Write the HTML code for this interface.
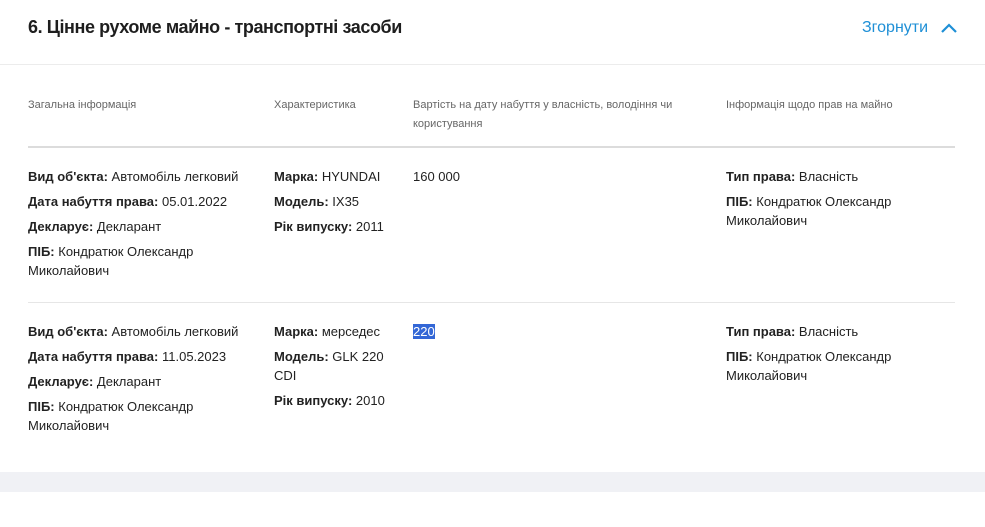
<!DOCTYPE html>
<html><head><meta charset="utf-8"><style>
*{margin:0;padding:0;box-sizing:border-box}
body{width:985px;height:527px;background:#fff;font-family:"Liberation Sans",sans-serif;color:#222;position:relative;overflow:hidden}
.title{position:absolute;left:28px;top:17px;font-size:18px;font-weight:700;color:#1e1e1e;letter-spacing:-0.42px}
.tog{position:absolute;left:862px;top:19px;font-size:16px;color:#1e8fd6}
.tog svg{position:absolute;left:78px;top:3px}
.hl{position:absolute;left:0;right:0;top:64px;height:1px;background:#ececec}
.h{position:absolute;top:96px;font-size:11px;line-height:19px;color:#666}
.hu{position:absolute;left:28px;width:927px;top:146px;height:2px;background:#dcdcdc}
.sep{position:absolute;left:28px;width:927px;top:302px;height:1px;background:#e6e6e6}
.c{position:absolute;font-size:13px;line-height:19px;color:#222}
.c p{margin-bottom:6px}
b{font-weight:700}
.band{position:absolute;left:0;right:0;top:472px;height:20px;background:#f0f1f5}
.sel{background:#3367d6;color:#fff}
</style></head><body>
<div class="title">6. Цінне рухоме майно - транспортні засоби</div>
<div class="tog">Згорнути<svg width="18" height="12" viewBox="0 0 18 12"><path d="M2 10 L9 3 L16 10" fill="none" stroke="#1e8fd6" stroke-width="2.2"/></svg></div>
<div class="hl"></div>
<div class="h" style="left:28px">Загальна інформація</div>
<div class="h" style="left:274px">Характеристика</div>
<div class="h" style="left:413px;width:290px">Вартість на дату набуття у власність, володіння чи користування</div>
<div class="h" style="left:726px">Інформація щодо прав на майно</div>
<div class="hu"></div>

<div class="c" style="left:28px;top:167px;width:230px">
<p><b>Вид об'єкта:</b> Автомобіль легковий</p>
<p><b>Дата набуття права:</b> 05.01.2022</p>
<p><b>Декларує:</b> Декларант</p>
<p><b>ПІБ:</b> Кондратюк Олександр Миколайович</p></div>
<div class="c" style="left:274px;top:167px;width:125px">
<p><b>Марка:</b> HYUNDAI</p><p><b>Модель:</b> IX35</p><p><b>Рік випуску:</b> 2011</p></div>
<div class="c" style="left:413px;top:167px">160 000</div>
<div class="c" style="left:726px;top:167px;width:200px">
<p><b>Тип права:</b> Власність</p><p><b>ПІБ:</b> Кондратюк Олександр Миколайович</p></div>
<div class="sep"></div>

<div class="c" style="left:28px;top:322px;width:230px">
<p><b>Вид об'єкта:</b> Автомобіль легковий</p>
<p><b>Дата набуття права:</b> 11.05.2023</p>
<p><b>Декларує:</b> Декларант</p>
<p><b>ПІБ:</b> Кондратюк Олександр Миколайович</p></div>
<div class="c" style="left:274px;top:322px;width:125px">
<p><b>Марка:</b> мерседес</p><p><b>Модель:</b> GLK 220 CDI</p><p><b>Рік випуску:</b> 2010</p></div>
<div class="c" style="left:413px;top:322px"><span class="sel">220</span></div>
<div class="c" style="left:726px;top:322px;width:200px">
<p><b>Тип права:</b> Власність</p><p><b>ПІБ:</b> Кондратюк Олександр Миколайович</p></div>
<div class="band"></div>
</body></html>
